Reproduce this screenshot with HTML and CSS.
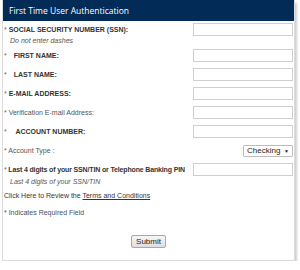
FILE: index.html
```html
<!DOCTYPE html>
<html lang="en">
<head>
    <meta charset="UTF-8">
    <title>First Time User Authentication</title>
    <link rel="stylesheet" href="styles.css">
</head>
<body>

    <div class="panel">
        <div class="panel-header">First Time User Authentication</div>

        <form id="authForm" class="panel-body">
            <div class="field">
                <label class="strong" for="ssn"><span class="req">*</span> SOCIAL SECURITY NUMBER (SSN):</label>
                <input type="text" id="ssn">
            </div>
            <div class="hint">Do not enter dashes</div>

            <div class="field">
                <label class="strong indent" for="firstName"><span class="req">*</span> FIRST NAME:</label>
                <input type="text" id="firstName">
            </div>

            <div class="field">
                <label class="strong indent" for="lastName"><span class="req">*</span> LAST NAME:</label>
                <input type="text" id="lastName">
            </div>

            <div class="field">
                <label class="strong" for="email"><span class="req">*</span> E-MAIL ADDRESS:</label>
                <input type="text" id="email">
            </div>

            <div class="field">
                <label for="email2"><span class="req">*</span> Verification E-mail Address:</label>
                <input type="text" id="email2">
            </div>

            <div class="field">
                <label class="strong indent wide" for="account"><span class="req">*</span> ACCOUNT NUMBER:</label>
                <input type="text" id="account">
            </div>

            <div class="field">
                <label for="accountType"><span class="req">*</span> Account Type :</label>
                <div class="select">Checking <span class="arrow">&#9660;</span></div>
            </div>

            <div class="field">
                <label class="strong tight" for="pin"><span class="req">*</span> Last 4 digits of your SSN/TIN or Telephone Banking PIN</label>
                <input type="text" id="pin">
            </div>
            <div class="hint last">Last 4 digits of your SSN/TIN</div>

            <p class="terms">Click Here to Review the <a href="#">Terms and Conditions</a></p>
            <p class="required">* Indicates Required Field</p>

            <div class="actions">
                <button type="submit" class="btn">Submit</button>
            </div>
        </form>
    </div>

</body>
</html>
```

FILE: styles.css
```css
body {
    margin: 0;
    padding: 0;
    background: #fff;
    font-family: "Liberation Sans", Arial, sans-serif;
    font-size: 7px;
    color: #333;
}

.panel {
    width: 293px;
    margin: 0 0 0 2px;
    height: 261px;
    border: 1px solid #dcdcdc;
    border-top: none;
    box-shadow: 2px 3px 2px #d0d0d0;
    box-sizing: border-box;
}

.panel-header {
    height: 21px;
    background: #032b57;
    color: #fff;
    font-family: "Open Sans", sans-serif;
    font-size: 8.5px;
    line-height: 21px;
    padding-left: 6px;
}

.panel-body {
    padding: 2px 1px 0 1px;
}

.field {
    display: flex;
    justify-content: space-between;
    align-items: center;
    height: 19px;
}

.field:first-child {
    height: 13px;
}

label {
    color: #555;
    white-space: nowrap;
}

label.strong {
    font-weight: bold;
    color: #333;
}

label.tight {
    letter-spacing: -0.15px;
}

label.indent .req {
    margin-right: 5px;
}

label.wide .req {
    margin-right: 7px;
}

.req {
    font-weight: normal;
    color: #666;
}

input {
    width: 100px;
    height: 13px;
    box-sizing: border-box;
    border: 1px solid #cfcfcf;
    margin: 0;
    padding: 0 2px;
    outline: none;
    flex-shrink: 0;
}

.select {
    width: 50px;
    height: 12px;
    box-sizing: border-box;
    border: 1px solid #bdbdbd;
    border-radius: 1px;
    font-size: 8px;
    line-height: 10px;
    padding-left: 3px;
    color: #222;
    display: flex;
    justify-content: space-between;
}

.arrow {
    font-size: 5px;
    padding-right: 3px;
}

.hint {
    font-style: italic;
    color: #555;
    padding-left: 6px;
    height: 10px;
    line-height: 10px;
}

.hint.last {
    margin-top: -2px;
}

.terms, .required {
    margin: 0;
    line-height: 10px;
}

.terms {
    margin-top: 4px;
}

.terms a {
    color: #333;
}

.required {
    margin-top: 7px;
    color: #4d5160;
}

.actions {
    text-align: center;
    margin-top: 17px;
}

.btn {
    font-family: "Liberation Sans", Arial, sans-serif;
    font-size: 8px;
    height: 13px;
    padding: 0 4px;
    border: 1px solid #a9a9a9;
    border-radius: 2px;
    background: linear-gradient(#f6f6f6, #dedede);
    color: #222;
}
```
